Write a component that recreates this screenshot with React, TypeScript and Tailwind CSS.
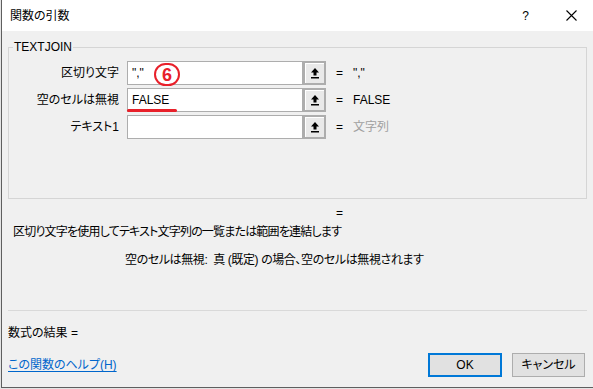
import React from 'react';

const font = "font-['Liberation_Sans','Noto_Sans_CJK_JP',sans-serif] [font-feature-settings:'palt']";

function RefButton() {
  return (
    <div className="w-[23px] h-[24px] border-2 border-[#adadad] bg-[#e9e9e9] shadow-[inset_1px_1px_0_#ffffff] flex items-center justify-center">
      <svg width="10" height="12" viewBox="0 0 10 12">
        <path d="M5 1 L9 5.5 H6.5 V8.5 H3.5 V5.5 H1 Z" fill="#000" />
        <rect x="1" y="10" width="8" height="1.5" fill="#000" />
      </svg>
    </div>
  );
}

function ArgRow({
  label,
  input,
  value,
  muted,
  children,
}: {
  label: string;
  input?: string;
  value: string;
  muted?: boolean;
  children?: React.ReactNode;
}) {
  return (
    <div className="relative flex items-center h-[24px]">
      <div className="w-[110px] text-right">{label}</div>
      <div className="ml-[8px] w-[176px] h-[24px] border border-[#adadad] bg-white flex items-center pl-[4px] whitespace-pre">
        {input}
      </div>
      <RefButton />
      <div className="ml-[10px]">=</div>
      <div className={`ml-[10px] ${muted ? 'text-[#a0a0a0]' : 'text-black'}`}>{value}</div>
      {children}
    </div>
  );
}

export default function App() {
  return (
    <div className={`w-[593px] h-[389px] bg-[#e4e4e4] overflow-hidden text-[12px] leading-[16px] text-black ${font}`}>
      <div className="ml-[1px] h-[388px] border-l border-b border-[#5f5f5f] flex flex-col">
        {/* Title bar */}
        <div className="h-[31px] bg-white flex items-center pl-[8px] shrink-0">
          <span>関数の引数</span>
          <span className="ml-auto mr-[37px]">?</span>
          <svg className="mr-[16px]" width="11" height="11" viewBox="0 0 11 11">
            <path d="M0.5 0.5 L10.5 10.5 M10.5 0.5 L0.5 10.5" stroke="#000" strokeWidth="1.1" />
          </svg>
        </div>

        {/* Body */}
        <div className="flex-1 bg-[#f0f0f0] flex flex-col">
          <div className="relative mt-[16px] ml-[6px] w-[579px] h-[152px] border border-[#d5d5d5]">
            <span className="absolute -top-[9px] left-[4px] bg-[#f0f0f0] px-[1px]">TEXTJOIN</span>
            <div className="pt-[13px] flex flex-col gap-[3px]">
              <ArgRow label="区切り文字" input={'","'} value={'","'}>
                <div className="absolute left-[145px] top-[2px] w-[26px] h-[23px] rounded-full border-2 border-[#e8202a] bg-white/60 flex items-center justify-center text-[#e8202a] font-bold text-[18px] leading-none">
                  6
                </div>
              </ArgRow>
              <ArgRow label="空のセルは無視" input="FALSE" value="FALSE">
                <div className="absolute left-[118px] top-[21px] w-[50px] h-[3px] rounded-full bg-[#e8202a]" />
              </ArgRow>
              <ArgRow label="テキスト1" value="文字列" muted />
            </div>
          </div>

          <div className="mt-[6px] pl-[334px]">=</div>
          <div className="mt-[3px] pl-[11px] tracking-[-0.8px]">区切り文字を使用してテキスト文字列の一覧または範囲を連結します</div>
          <div className="mt-[12px] pl-[123px] whitespace-pre tracking-[-0.4px]">空のセルは無視:  真 (既定) の場合、空のセルは無視されます</div>

          <div className="mt-[42px] ml-[6px] w-[579px] h-px bg-[#d9d9d9]" />

          <div className="mt-[14px] pl-[6px]">数式の結果 =</div>

          <div className="mt-[12px] flex items-center h-[24px]">
            <a className="pl-[6px] text-[#0066cc] underline underline-offset-2">この関数のヘルプ(H)</a>
            <div className="ml-auto mr-[8px] flex gap-[10px]">
              <button className="w-[74px] h-[24px] border-2 border-[#0078d7] bg-[#e1e1e1] text-[12px]">OK</button>
              <button className="w-[73px] h-[24px] border border-[#adadad] bg-[#e1e1e1] text-[12px]">キャンセル</button>
            </div>
          </div>
        </div>
      </div>
    </div>
  );
}
